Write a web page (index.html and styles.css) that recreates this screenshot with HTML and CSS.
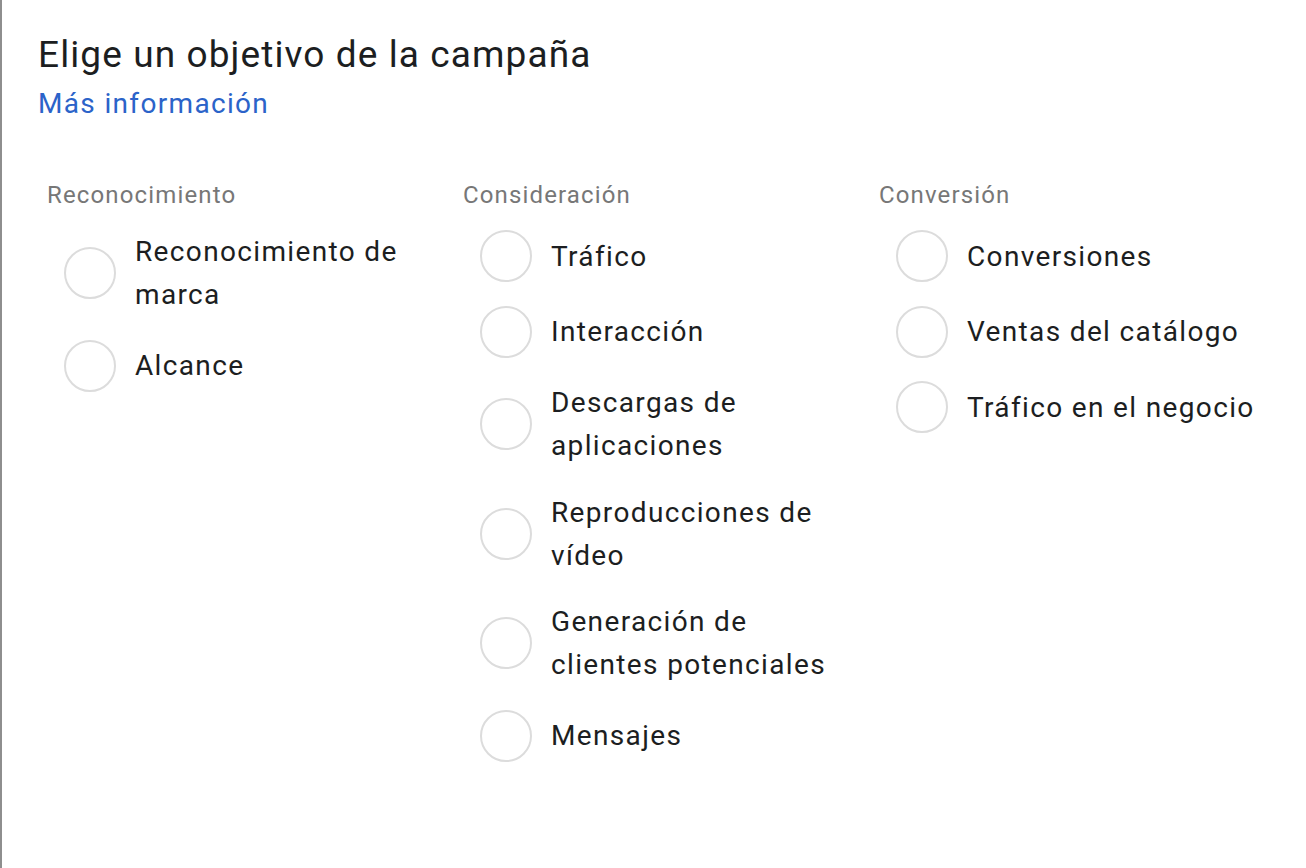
FILE: index.html
```html
<!DOCTYPE html>
<html lang="es">
<head>
  <meta charset="UTF-8" />
  <meta name="viewport" content="width=device-width, initial-scale=1.0"/>
  <title>Objetivo de la campaña</title>
  <link rel="stylesheet" href="styles.css">
</head>
<body>

<div class="panel">
  <h1 class="titulo">Elige un objetivo de la campaña</h1>
  <a class="mas-info" href="#">Más información</a>

  <div class="columnas">
    <!-- Reconocimiento -->
    <section class="grupo">
      <h2>Reconocimiento</h2>
      <ul class="opciones">
        <li class="opcion"><span class="radio"></span><span class="texto">Reconocimiento de marca</span></li>
        <li class="opcion"><span class="radio"></span><span class="texto">Alcance</span></li>
      </ul>
    </section>

    <!-- Consideración -->
    <section class="grupo">
      <h2>Consideración</h2>
      <ul class="opciones">
        <li class="opcion"><span class="radio"></span><span class="texto">Tráfico</span></li>
        <li class="opcion"><span class="radio"></span><span class="texto">Interacción</span></li>
        <li class="opcion"><span class="radio"></span><span class="texto">Descargas de aplicaciones</span></li>
        <li class="opcion"><span class="radio"></span><span class="texto">Reproducciones de vídeo</span></li>
        <li class="opcion"><span class="radio"></span><span class="texto">Generación de clientes potenciales</span></li>
        <li class="opcion"><span class="radio"></span><span class="texto">Mensajes</span></li>
      </ul>
    </section>

    <!-- Conversión -->
    <section class="grupo">
      <h2>Conversión</h2>
      <ul class="opciones">
        <li class="opcion"><span class="radio"></span><span class="texto">Conversiones</span></li>
        <li class="opcion"><span class="radio"></span><span class="texto">Ventas del catálogo</span></li>
        <li class="opcion"><span class="radio"></span><span class="texto">Tráfico en el negocio</span></li>
      </ul>
    </section>
  </div>
</div>

</body>
</html>
```

FILE: styles.css
```css
body {
  font-family: Roboto, 'Liberation Sans', sans-serif;
  background: #fff;
  margin: 0;
  color: #1c1e21;
}
.panel {
  border-left: 2px solid #8e8e8e;
  min-height: 100vh;
  box-sizing: border-box;
  padding: 33px 0 0 36px;
}
.titulo {
  font-size: 37px;
  font-weight: 400;
  line-height: 44px;
  letter-spacing: 1.1px;
  margin: 0;
}
.mas-info {
  display: inline-block;
  margin-top: 9px;
  font-size: 28px;
  line-height: 36px;
  letter-spacing: 1.33px;
  color: #2b63c9;
  text-decoration: none;
}
.columnas {
  display: grid;
  grid-template-columns: 416px 416px 416px;
  margin-top: 58px;
}
.grupo h2 {
  font-size: 24px;
  font-weight: 400;
  line-height: 30px;
  letter-spacing: 1.14px;
  color: #777;
  margin: 0 0 8px 9px;
}
.opciones {
  list-style: none;
  margin: 0;
  padding: 0;
}
.opcion {
  display: flex;
  align-items: center;
  padding: 12px 0 11.5px 26px;
}
.radio {
  flex: none;
  width: 48px;
  height: 48px;
  border: 2px solid #dcdcdc;
  border-radius: 50%;
  margin-right: 19px;
}
.texto {
  width: 300px;
  font-size: 28px;
  line-height: 43px;
  letter-spacing: 1.35px;
}
```
